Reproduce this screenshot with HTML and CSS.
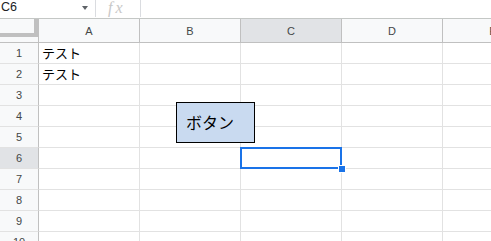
FILE: index.html
```html
<!DOCTYPE html>
<html lang="ja">
<head>
  <meta charset="UTF-8">
  <meta name="viewport" content="width=device-width, initial-scale=1.0">
  <title>Sheet</title>
  <link rel="stylesheet" href="styles.css">
</head>
<body>
  <div class="formula-bar">
    <div class="name-box">
      <span class="cell-ref">C6</span>
      <span class="arrow"></span>
    </div>
    <div class="fx">fx</div>
    <div class="formula-input"></div>
  </div>

  <div class="sheet-wrap">
    <div class="sheet">
      <div class="corner"></div>
      <div class="col-head">A</div>
      <div class="col-head">B</div>
      <div class="col-head active">C</div>
      <div class="col-head">D</div>
      <div class="col-head">E</div>

      <div class="row-head">1</div>
      <div class="cell">テスト</div><div class="cell"></div><div class="cell"></div><div class="cell"></div><div class="cell"></div>
      <div class="row-head">2</div>
      <div class="cell">テスト</div><div class="cell"></div><div class="cell"></div><div class="cell"></div><div class="cell"></div>
      <div class="row-head">3</div>
      <div class="cell"></div><div class="cell"></div><div class="cell"></div><div class="cell"></div><div class="cell"></div>
      <div class="row-head">4</div>
      <div class="cell"></div><div class="cell"></div><div class="cell"></div><div class="cell"></div><div class="cell"></div>
      <div class="row-head">5</div>
      <div class="cell"></div><div class="cell"></div><div class="cell"></div><div class="cell"></div><div class="cell"></div>
      <div class="row-head active">6</div>
      <div class="cell"></div><div class="cell"></div><div class="cell"></div><div class="cell"></div><div class="cell"></div>
      <div class="row-head">7</div>
      <div class="cell"></div><div class="cell"></div><div class="cell"></div><div class="cell"></div><div class="cell"></div>
      <div class="row-head">8</div>
      <div class="cell"></div><div class="cell"></div><div class="cell"></div><div class="cell"></div><div class="cell"></div>
      <div class="row-head">9</div>
      <div class="cell"></div><div class="cell"></div><div class="cell"></div><div class="cell"></div><div class="cell"></div>
      <div class="row-head">10</div>
      <div class="cell"></div><div class="cell"></div><div class="cell"></div><div class="cell"></div><div class="cell"></div>
    </div>

    <div class="drawing-button">ボタン</div>
    <div class="selection"><span class="handle"></span></div>
  </div>
</body>
</html>
```

FILE: styles.css
```css
* {
  margin: 0;
  padding: 0;
  box-sizing: border-box;
}

body {
  font-family: Arial, "Liberation Sans", "Noto Sans CJK JP", sans-serif;
  background-color: white;
  overflow: hidden;
  width: 491px;
  height: 241px;
}

/* formula bar */
.formula-bar {
  display: flex;
  height: 19px;
  border-bottom: 1px solid #c4c7c5;
}

.name-box {
  width: 96px;
  display: flex;
  align-items: center;
  justify-content: space-between;
  padding: 0 7px 3px 1px;
  border-right: 1px solid #dadce0;
  height: 17px;
}

.cell-ref {
  font-size: 12.5px;
  color: #202124;
}

.arrow {
  width: 0;
  height: 0;
  border-left: 3.5px solid transparent;
  border-right: 3.5px solid transparent;
  border-top: 4px solid #5f6368;
  margin-top: 2px;
}

.fx {
  width: 45px;
  height: 17px;
  padding-left: 12px;
  font-family: "Liberation Serif", "DejaVu Serif", serif;
  font-style: italic;
  font-size: 16px;
  line-height: 16px;
  letter-spacing: 3px;
  color: #c8c8c8;
  border-right: 1px solid #dadce0;
}

.formula-input {
  flex: 1;
}

/* grid */
.sheet-wrap {
  position: relative;
}

.sheet {
  display: grid;
  grid-template-columns: 39px repeat(5, 101px);
  grid-template-rows: 24px repeat(10, 21px);
}

.sheet > div {
  border-right: 1px solid #e2e2e2;
  border-bottom: 1px solid #e2e2e2;
}

.corner {
  background-color: #f8f9fa;
  position: relative;
  border-right: 1px solid #c0c0c0 !important;
  border-bottom: 1px solid #c0c0c0 !important;
}

.corner::before {
  content: "";
  position: absolute;
  left: 0;
  top: 0;
  width: 38px;
  height: 18px;
  border-right: 4px solid #c0c0c0;
  border-bottom: 4px solid #c0c0c0;
  box-sizing: border-box;
}

.col-head {
  background-color: #f8f9fa;
  border-right: 1px solid #c0c0c0 !important;
  border-bottom: 1px solid #c0c0c0 !important;
  font-size: 11px;
  color: #444746;
  display: flex;
  align-items: center;
  justify-content: center;
}

.row-head {
  background-color: #f8f9fa;
  border-right: 1px solid #c0c0c0 !important;
  font-size: 11px;
  color: #444746;
  display: flex;
  align-items: center;
  justify-content: center;
}

.col-head.active,
.row-head.active {
  background-color: #e1e3e6;
}

.cell {
  font-family: "Noto Sans CJK JP", sans-serif;
  font-size: 13px;
  line-height: 20px;
  padding-left: 3px;
  color: #000;
}

/* overlays */
.drawing-button {
  position: absolute;
  left: 176px;
  top: 83px;
  width: 79px;
  height: 41px;
  border: 1px solid #000;
  background-color: #c9daf0;
  font-family: "Noto Sans CJK JP", sans-serif;
  font-size: 16px;
  line-height: 38px;
  padding-left: 9px;
  color: #000;
}

.selection {
  position: absolute;
  left: 240px;
  top: 128px;
  width: 102px;
  height: 22px;
  border: 2px solid #1a73e8;
}

.handle {
  position: absolute;
  right: -6px;
  bottom: -6px;
  width: 8px;
  height: 8px;
  background-color: #1a73e8;
  border: 1px solid white;
}
```
